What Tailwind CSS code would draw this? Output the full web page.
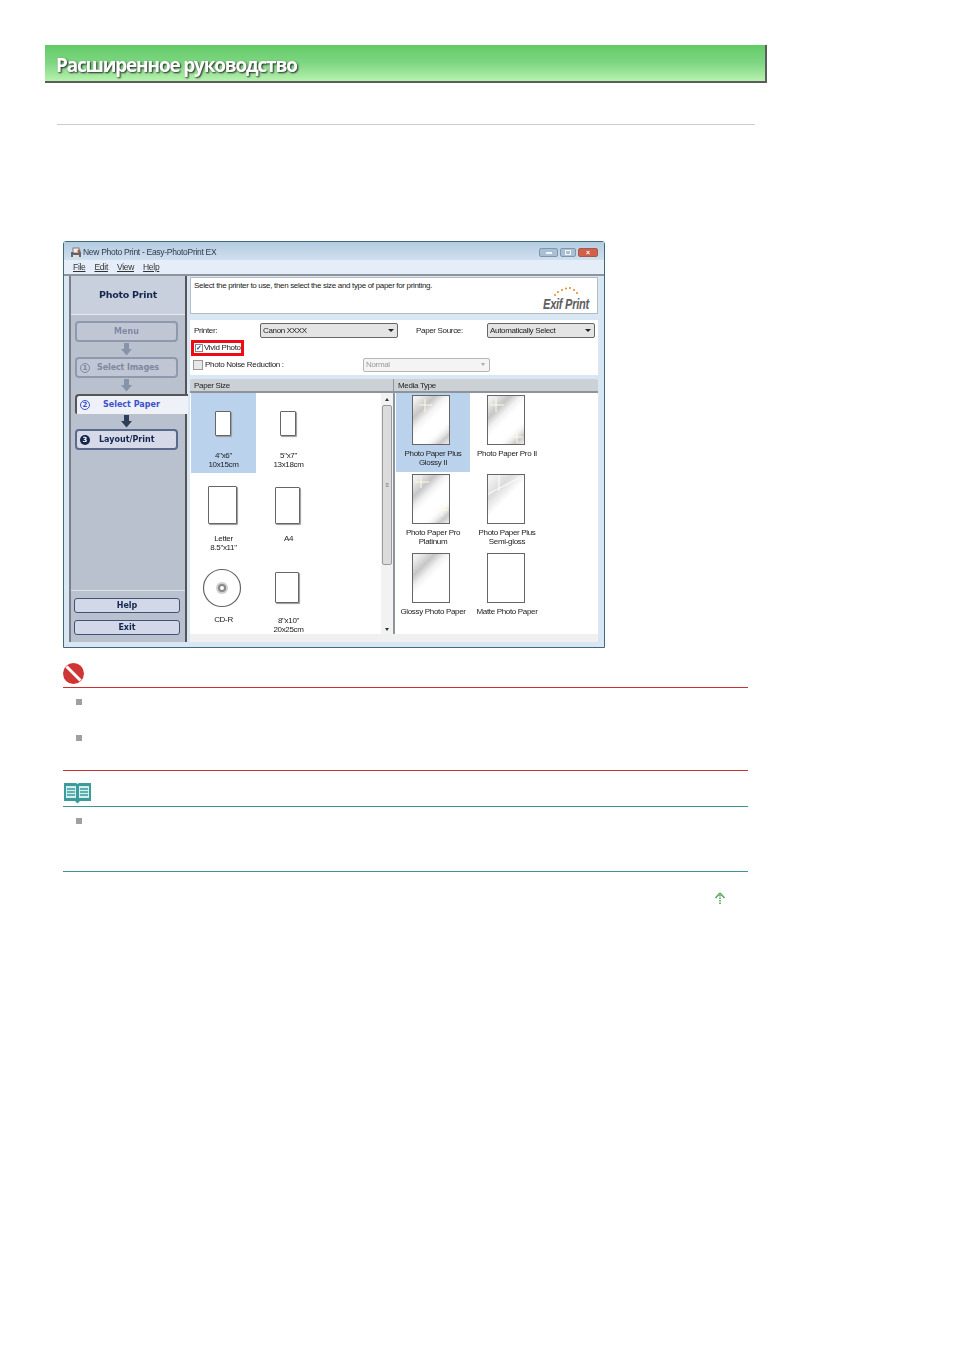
<!DOCTYPE html>
<html lang="ru">
<head>
  <meta charset="UTF-8" />
  <title>Расширенное руководство</title>
  <script src="https://cdn.jsdelivr.net/npm/@tailwindcss/browser@4"></script>
</head>
<body class="bg-white min-h-screen font-['Liberation_Sans',sans-serif] text-[#222] antialiased">

  <!-- Shared paper gloss gradients -->
  <svg class="absolute w-0 h-0">
    <defs>
      <linearGradient id="glossTop" gradientUnits="userSpaceOnUse" x1="4" y1="4" x2="22" y2="22">
        <stop offset="0" stop-color="#f0f0f0"/><stop offset="0.45" stop-color="#c6c6c6"/><stop offset="0.75" stop-color="#f2f2f2"/><stop offset="1" stop-color="#fff"/>
      </linearGradient>
      <linearGradient id="glossBottom" gradientUnits="userSpaceOnUse" x1="24" y1="36" x2="37" y2="50">
        <stop offset="0" stop-color="#fff" stop-opacity="0"/><stop offset="0.6" stop-color="#cacaca"/><stop offset="1" stop-color="#f2f2f2"/>
      </linearGradient>
      <linearGradient id="glossSoft" gradientUnits="userSpaceOnUse" x1="4" y1="4" x2="22" y2="22">
        <stop offset="0" stop-color="#f2f2f2"/><stop offset="0.5" stop-color="#dcdcdc"/><stop offset="1" stop-color="#fff"/>
      </linearGradient>
    </defs>
  </svg>

  <!-- Header -->
  <div class="pt-[45px] pl-[45px]">
    <header class="w-[722px] h-[38px] border-r-[2px] border-b-[2px] border-[#5c5c5c] bg-gradient-to-b from-[#62cb65] via-[#7ed683] to-[#b6f2ae] pl-[11px] pt-[5px] flex items-center">
      <h1 class="font-['Open_Sans',sans-serif] font-bold text-[19px] tracking-[-1.2px] text-white blur-[0.5px] [text-shadow:1px_1px_2px_#222]">Расширенное руководство</h1>
    </header>
  </div>
  <div class="ml-[57px] w-[698px] h-px bg-[#cccccc] mt-[41px]"></div>

  <!-- Screenshot window -->
  <div class="ml-[63px] mt-[116px] w-[542px] h-[407px] border border-[#3f6a78] bg-[#d9e7f4] flex flex-col blur-[0.45px] rounded-t-[3px]">
    <div class="h-[18px] shrink-0 bg-gradient-to-b from-[#b3cbe0] to-[#cfe0ef] flex items-center pl-[6px] pr-[5px] pt-[3px]">
      <svg width="12" height="12" viewBox="0 0 12 12"><rect x="1" y="5" width="10" height="5" fill="#666"/><rect x="3" y="1" width="6" height="5" fill="#eee" stroke="#555" stroke-width="0.7"/><rect x="3" y="8" width="6" height="3" fill="#ddd"/><circle cx="9" cy="4" r="1.6" fill="#b5572f"/></svg>
      <span class="ml-[1px] text-[8.5px] tracking-[-0.3px] text-[#333a4a]">New Photo Print - Easy-PhotoPrint EX</span>
      <div class="ml-auto flex gap-[2px] mr-[1px] mt-[-1px]">
        <div class="w-[19px] h-[9px] rounded-[2px] border border-[#7f97ac] bg-[#a9bfd4] flex items-center justify-center"><div class="w-[6px] h-[2px] bg-[#f4f7fa] mt-[2px]"></div></div>
        <div class="w-[16px] h-[9px] rounded-[2px] border border-[#7f97ac] bg-[#a9bfd4] flex items-center justify-center"><div class="w-[6px] h-[5px] border border-[#f4f7fa]"></div></div>
        <div class="w-[20px] h-[9px] rounded-[2px] border border-[#a85a4a] bg-[#d0604a] flex items-center justify-center text-[7px] leading-none font-bold text-white">×</div>
      </div>
    </div>
    <div class="h-[14px] shrink-0 bg-[#e4edf8] flex items-center pl-[9px] gap-[9px] text-[8.5px] tracking-[-0.3px] text-[#333]">
      <span class="underline">File</span><span class="underline">Edit</span><span class="underline">View</span><span class="underline">Help</span>
    </div>

    <div class="flex-1 flex pl-[5px] border-t-[2px] border-[#8d949c] min-h-0">
      <!-- Sidebar -->
      <div class="w-[118px] h-[366px] shrink-0 bg-[#b9c0ce] border-l-[2px] border-l-[#7b8088] border-r-[2px] border-r-[#555] flex flex-col font-['DejaVu_Sans',sans-serif] font-bold">
        <div class="h-[39px] bg-[#c9d0dd] border-b border-[#e6eaf0] flex items-center justify-center text-[9.5px] tracking-[-0.25px] text-[#14264e]">Photo Print</div>
        <div class="pt-[6px] pl-[4px] flex flex-col items-start">
          <div class="w-[103px] h-[21px] rounded-[4px] border-[2px] border-[#8f99ad] bg-[#c0c6d4] flex items-center justify-center text-[8px] text-[#7d88a2]">Menu</div>
          <svg class="ml-[46px] my-[1px]" width="11" height="13" viewBox="0 0 11 13"><path d="M3 0h5v6h3l-5.500 6.500L0 6h3z" fill="#8793a8"/></svg>
          <div class="w-[103px] h-[21px] rounded-[4px] border-[2px] border-[#8f99ad] bg-[#c0c6d4] flex items-center text-[8px] tracking-[-0.1px] text-[#7d88a2]"><span class="ml-[3px] w-[10px] h-[10px] rounded-full border border-[#7d88a2] text-[7px] leading-[8px] text-center">1</span><span class="ml-[7px]">Select Images</span></div>
          <svg class="ml-[46px] my-[1px]" width="11" height="13" viewBox="0 0 11 13"><path d="M3 0h5v6h3l-5.500 6.500L0 6h3z" fill="#8793a8"/></svg>
          <div class="relative mt-[1px] w-[113px] h-[20px] rounded-tl-[4px] rounded-bl-[2px] border-l-[2px] border-t-[2px] border-[#555] bg-[#eef1f8] flex items-center text-[8px] text-[#3d50cc]"><span class="ml-[3px] w-[10px] h-[10px] rounded-full border border-[#3d50cc] text-[7px] leading-[8px] text-center">2</span><span class="ml-[13px]">Select Paper</span></div>
          <svg class="ml-[46px] my-[1px]" width="11" height="13" viewBox="0 0 11 13"><path d="M3 0h5v6h3l-5.500 6.500L0 6h3z" fill="#2e3d58"/></svg>
          <div class="w-[103px] h-[21px] rounded-[4px] border-[2px] border-[#5a6a8a] bg-[#d5d9e8] flex items-center text-[8px] text-[#14264e]"><span class="ml-[3px] w-[10px] h-[10px] rounded-full bg-[#14264e] text-[7px] leading-[10px] text-center text-white">3</span><span class="ml-[9px]">Layout/Print</span></div>
        </div>
        <div class="mt-auto h-[52px] border-t border-[#dde1e8] pl-[3px] pt-[7px] flex flex-col gap-[7px]">
          <div class="w-[106px] h-[15px] rounded-[3px] border border-[#3f5278] bg-[#d3d8e8] flex items-center justify-center text-[8px] text-[#14264e]">Help</div>
          <div class="w-[106px] h-[15px] rounded-[3px] border border-[#3f5278] bg-[#d3d8e8] flex items-center justify-center text-[8px] text-[#14264e]">Exit</div>
        </div>
      </div>

      <!-- Main -->
      <div class="w-[408px] ml-[3px] flex flex-col text-[8px] tracking-[-0.33px] text-[#222]">
        <div class="relative h-[37px] mt-[1px] shrink-0 bg-white border border-[#b4bcc6] pl-[3px] pt-[2px]">
          Select the printer to use, then select the size and type of paper for printing.
          <div class="absolute right-[8px] bottom-[2px] w-[48px] h-[26px]">
            <svg class="absolute left-[12px] top-[0px]" width="26" height="12" viewBox="0 0 26 12" fill="#e8912c"><circle cx="2" cy="10" r="1.100"/><circle cx="5" cy="7" r="1.100"/><circle cx="9" cy="5" r="1.100"/><circle cx="13" cy="3.500" r="1.100"/><circle cx="17" cy="3" r="1.100"/><circle cx="21" cy="5" r="1.100"/><circle cx="24" cy="8" r="1.100"/></svg>
            <span class="absolute right-0 bottom-0 origin-right scale-x-[0.74] font-['Liberation_Sans',sans-serif] italic font-bold text-[15px] leading-[15px] tracking-[-0.4px] text-[#5f5f5f] whitespace-nowrap">Exif Print</span>
          </div>
        </div>

        <div class="h-[55px] mt-[6px] shrink-0 bg-white pl-[4px] pt-[3px]">
          <div class="flex items-center h-[15px]">
            <span class="w-[66px]">Printer:</span>
            <div class="w-[138px] h-[15px] rounded-[2px] border border-[#666] bg-[#e4e4e4] flex items-center justify-between px-[2px]">Canon XXXX<span class="w-0 h-0 border-x-[3px] border-x-transparent border-t-[3px] border-t-[#222] mr-[1px]"></span></div>
            <span class="ml-[18px] w-[71px]">Paper Source:</span>
            <div class="w-[108px] h-[15px] rounded-[2px] border border-[#666] bg-[#e4e4e4] flex items-center justify-between px-[2px]">Automatically Select<span class="w-0 h-0 border-x-[3px] border-x-transparent border-t-[3px] border-t-[#222] mr-[1px]"></span></div>
          </div>
          <div class="w-[53px] h-[16px] mt-[2px] -ml-[3px] border-[3px] border-[#ee0b16] flex items-center pl-[1px]">
            <span class="w-[8px] h-[8px] border border-[#888] bg-white text-[#254a9a] text-[7px] leading-[6px] font-bold shrink-0">✓</span><span class="ml-[1px] whitespace-nowrap overflow-hidden">Vivid Photo</span>
          </div>
          <div class="flex items-center h-[15px] mt-[1px] -ml-[1px]">
            <span class="w-[10px] h-[10px] border border-[#999] bg-[#e8e8e8]"></span>
            <span class="ml-[2px] w-[158px]">Photo Noise Reduction :</span>
            <div class="w-[127px] h-[14px] rounded-[2px] border border-[#b5b5b5] bg-[#f4f4f4] flex items-center justify-between px-[2px] text-[#999]">Normal<span class="w-0 h-0 border-x-[2.500px] border-x-transparent border-t-[3px] border-t-[#aaa] mr-[2px]"></span></div>
          </div>
        </div>

        <div class="h-[14px] mt-[4px] shrink-0 flex bg-[#ccd1d6] border-b-[2px] border-[#8d949c] rounded-t-[2px]">
          <div class="w-[204px] pl-[4px] border-r border-[#8d949c] leading-[13px]">Paper Size</div>
          <div class="pl-[4px] leading-[13px]">Media Type</div>
        </div>

        <div class="h-[241px] shrink-0 flex bg-white overflow-hidden">
          <!-- Paper size -->
          <div class="w-[191px] grid grid-cols-[65px_65px] grid-rows-[80px_82px_82px] pl-[1px] text-center leading-[9px]">
            <div class="bg-[#bad2ec] pt-[18px]">
              <div class="ml-[24px] w-[16px] h-[25px] bg-white border border-[#666] rounded-[1px] shadow-[1px_1px_1px_#999]"></div>
              <div class="mt-[15px]">4"x6"<br>10x15cm</div>
            </div>
            <div class="pt-[18px]">
              <div class="ml-[24px] w-[16px] h-[25px] bg-white border border-[#666] rounded-[1px] shadow-[1px_1px_1px_#999]"></div>
              <div class="mt-[15px]">5"x7"<br>13x18cm</div>
            </div>
            <div class="pt-[13px]">
              <div class="ml-[17px] w-[29px] h-[38px] bg-white border border-[#666] rounded-[1px] shadow-[1px_1px_1px_#999]"></div>
              <div class="mt-[10px]">Letter<br>8.5"x11"</div>
            </div>
            <div class="pt-[14px]">
              <div class="ml-[19px] w-[25px] h-[37px] bg-white border border-[#666] rounded-[1px] shadow-[1px_1px_1px_#999]"></div>
              <div class="mt-[10px]">A4</div>
            </div>
            <div class="pt-[13px]">
              <svg class="ml-[11px]" width="40" height="40" viewBox="0 0 40 40"><circle cx="20" cy="20" r="18.500" fill="#fff" stroke="#666" stroke-width="1.200"/><circle cx="20" cy="20" r="6" fill="#cfcfcf"/><circle cx="20" cy="20" r="4" fill="#888"/><circle cx="20" cy="20" r="2" fill="#fff"/></svg>
              <div class="mt-[7px]">CD-R</div>
            </div>
            <div class="pt-[17px]">
              <div class="ml-[19px] w-[24px] h-[31px] bg-white border border-[#666] rounded-[1px] shadow-[1px_1px_1px_#999]"></div>
              <div class="mt-[13px]">8"x10"<br>20x25cm</div>
            </div>
          </div>
          <!-- Scrollbar -->
          <div class="w-[12px] bg-[#f2f2f2] flex flex-col items-center">
            <span class="mt-[5px] w-0 h-0 border-x-[2.500px] border-x-transparent border-b-[3px] border-b-[#333]"></span>
            <div class="mt-[4px] w-[10px] h-[160px] rounded-[2px] border border-[#9a9a9a] bg-[#dcdcdc] flex items-center justify-center text-[6px] text-[#666] leading-none">≡</div>
            <span class="mt-auto mb-[3px] w-0 h-0 border-x-[2.500px] border-x-transparent border-t-[3px] border-t-[#333]"></span>
          </div>
          <div class="w-[2px] bg-[#8d949c]"></div>
          <!-- Media type -->
          <div class="grid grid-cols-[74px_74px] grid-rows-[79px_79px_79px] pl-[1px] text-center leading-[9px]">
            <div class="bg-[#bad2ec] pt-[2px]">
              <svg class="ml-[16px]" width="39" height="51" viewBox="0 0 39 51"><rect x="0.500" y="0.500" width="37" height="49" fill="url(#glossTop)" stroke="#666"/><rect x="1" y="1" width="36" height="48" fill="url(#glossBottom)"/><path d="M13 4v13M7 10h13" stroke="#fffbe0" stroke-width="1"/></svg>
              <div class="mt-[3px]">Photo Paper Plus<br>Glossy II</div>
            </div>
            <div class="pt-[2px]">
              <svg class="ml-[17px]" width="39" height="51" viewBox="0 0 39 51"><rect x="0.500" y="0.500" width="37" height="49" fill="url(#glossTop)" stroke="#666"/><rect x="1" y="1" width="36" height="48" fill="url(#glossBottom)"/><path d="M9 3v14M3 10h14M30 36v12M24 42h12" stroke="#fffbe0" stroke-width="1"/></svg>
              <div class="mt-[3px]">Photo Paper Pro II</div>
            </div>
            <div class="pt-[2px]">
              <svg class="ml-[16px]" width="39" height="51" viewBox="0 0 39 51"><rect x="0.500" y="0.500" width="37" height="49" fill="url(#glossTop)" stroke="#666"/><rect x="1" y="1" width="36" height="48" fill="url(#glossBottom)"/><path d="M9 2v12M3 8h14M30 30v12M24 36h12" stroke="#fffbe0" stroke-width="1"/></svg>
              <div class="mt-[3px]">Photo Paper Pro<br>Platinum</div>
            </div>
            <div class="pt-[2px]">
              <svg class="ml-[17px]" width="39" height="51" viewBox="0 0 39 51"><rect x="0.500" y="0.500" width="37" height="49" fill="url(#glossSoft)" stroke="#666"/><path d="M1 20L34 3M12 1v16" stroke="#fff" stroke-width="1"/></svg>
              <div class="mt-[3px]">Photo Paper Plus<br>Semi-gloss</div>
            </div>
            <div class="pt-[2px]">
              <svg class="ml-[16px]" width="39" height="51" viewBox="0 0 39 51"><rect x="0.500" y="0.500" width="37" height="49" fill="url(#glossTop)" stroke="#666"/></svg>
              <div class="mt-[3px]">Glossy Photo Paper</div>
            </div>
            <div class="pt-[2px]">
              <svg class="ml-[17px]" width="39" height="51" viewBox="0 0 39 51"><rect x="0.500" y="0.500" width="37" height="49" fill="#fff" stroke="#666"/></svg>
              <div class="mt-[3px]">Matte Photo Paper</div>
            </div>
          </div>
        </div>
        <div class="h-[8px] shrink-0 bg-[#f0f0f0]"></div>
      </div>
    </div>
  </div>

  <!-- Notes -->
  <div class="ml-[63px] w-[685px]">
    <div class="mt-[15px] h-[25px] border-b border-[#c93232]">
      <svg width="21" height="21" viewBox="0 0 21 21"><circle cx="10.500" cy="10.500" r="10.500" fill="#cf3535"/><path d="M3.500 3.500L17.500 17.500" stroke="#fff" stroke-width="3"/></svg>
    </div>
    <ul class="h-[83px] pl-[13px] pt-[11px] border-b border-[#c93232]">
      <li class="w-[6px] h-[6px] bg-[#a0a0a0]"></li>
      <li class="w-[6px] h-[6px] bg-[#a0a0a0] mt-[30px]"></li>
    </ul>
    <div class="mt-[12px] h-[24px] border-b border-[#3d9490]">
      <svg width="29" height="21" viewBox="0 0 29 21"><path d="M1 0h11q2 0 2.500 1q.5-1 2.500-1h11v18H17l-2.500 2.500L12 18H1z" fill="#3a9c9c"/><path d="M3 3h10v12H3zM16 3h10v12H16z" fill="#d6efec"/><path d="M4 6h8M4 9h8M4 12h8M17 6h8M17 9h8M17 12h8" stroke="#3a9c9c" stroke-width="1.300"/></svg>
    </div>
    <ul class="h-[65px] pl-[13px] pt-[11px] border-b border-[#3d9490]">
      <li class="w-[6px] h-[6px] bg-[#a0a0a0]"></li>
    </ul>
    <div class="mt-[20px] pl-[651px]">
      <svg width="12" height="14" viewBox="0 0 12 14"><path d="M6 1L1.500 6M6 1l4.500 5" stroke="#5aa55a" stroke-width="1.500" fill="none"/><path d="M6 3v10" stroke="#4c9a4c" stroke-width="1.500" stroke-dasharray="1.500 1"/></svg>
    </div>
  </div>

</body>
</html>
